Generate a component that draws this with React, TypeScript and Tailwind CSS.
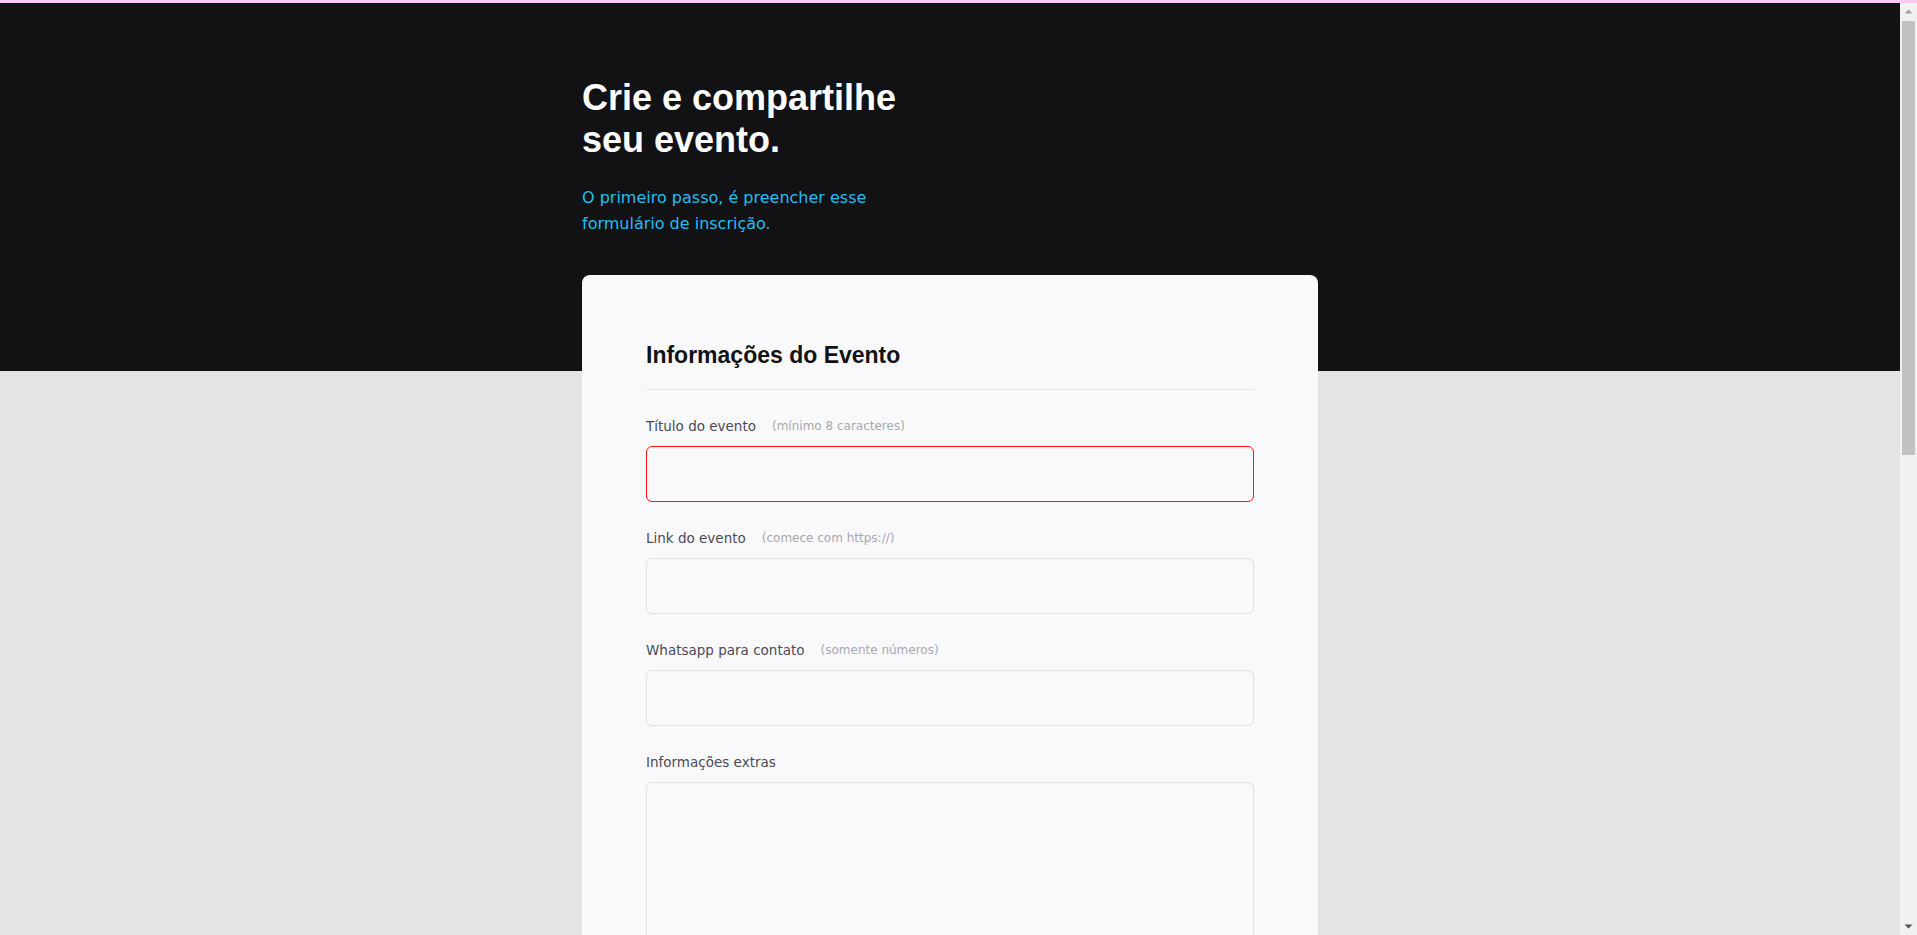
import React from "react";

const FONT = '"DejaVu Sans", "Noto Sans", sans-serif';
const label = "text-[13.5px] leading-6 text-[#4a4a57]";
const hint = "ml-4 text-[12px] text-[#a8a8b3]";
const input =
  "block w-full h-14 rounded-md border border-[#e1e1e6] bg-[#f9f9fb] px-4 text-[14px] text-[#41414d] outline-none";

function Field({
  title,
  note,
  error,
}: {
  title: string;
  note?: string;
  error?: boolean;
}) {
  return (
    <div className="mb-6">
      <label className={`${label} mb-2 flex items-center`}>
        <span>{title}</span>
        {note && <span className={hint}>{note}</span>}
      </label>
      <input
        className={
          error
            ? "block w-full h-14 rounded-md border border-[#ff1414] bg-[#f9f9fb] px-4 text-[14px] outline-none"
            : input
        }
      />
    </div>
  );
}

function ScrollBar() {
  return (
    <div className="w-[17px] shrink-0 flex flex-col bg-[#f1f1f1]">
      <div className="h-[17px] flex items-center justify-center">
        <svg width="9" height="5" viewBox="0 0 9 5">
          <polygon points="0.5,4.5 4.5,0.5 8.5,4.5" fill="#a3a3a3" />
        </svg>
      </div>
      <div className="flex-1 flex flex-col">
        <div className="mx-[2px] mt-[1px] h-[434px] bg-[#c1c1c1]" />
      </div>
      <div className="h-[17px] flex items-center justify-center">
        <svg width="9" height="5" viewBox="0 0 9 5">
          <polygon points="0.5,0.5 8.5,0.5 4.5,4.5" fill="#505050" />
        </svg>
      </div>
    </div>
  );
}

export default function App() {
  return (
    <div className="h-screen flex flex-col bg-[#121214]" style={{ fontFamily: FONT }}>
      <div className="h-[3px] shrink-0 bg-[#fbc9ef]" />
      <div className="flex-1 min-h-0 flex">
        <div className="flex-1 min-w-0 overflow-hidden bg-[#e4e4e4]">
          <header className="bg-[#121214] pt-[74px] pb-[134px]">
            <div className="mx-auto w-[736px]">
              <h1
                className="text-[36px] leading-[42px] font-bold text-white"
                style={{ fontFamily: '"Liberation Sans", Arial, sans-serif' }}
              >
                Crie e compartilhe
                <br />
                seu evento.
              </h1>
              <p className="mt-6 text-[16px] leading-[26px] text-[#22bdf2]">
                O primeiro passo, é preencher esse
                <br />
                formulário de inscrição.
              </p>
            </div>
          </header>
          <main className="mx-auto -mt-24 w-[736px] pb-20">
            <form className="rounded-lg bg-[#f9f9fb] px-16 pt-16 pb-16">
              <fieldset>
                <legend
                  className="w-full border-b border-[#e1e1e6] pb-[18px] mb-6 text-[23px] leading-8 font-bold text-[#121214]"
                  style={{ fontFamily: '"Liberation Sans", Arial, sans-serif' }}
                >
                  Informações do Evento
                </legend>
                <Field title="Título do evento" note="(mínimo 8 caracteres)" error />
                <Field title="Link do evento" note="(comece com https://)" />
                <Field title="Whatsapp para contato" note="(somente números)" />
                <div className="mb-6">
                  <label className={`${label} mb-2 block`}>Informações extras</label>
                  <textarea className="block w-full h-[240px] resize-none rounded-md border border-[#e1e1e6] bg-[#f9f9fb] p-4 text-[14px] outline-none" />
                </div>
              </fieldset>
            </form>
          </main>
        </div>
        <ScrollBar />
      </div>
    </div>
  );
}
